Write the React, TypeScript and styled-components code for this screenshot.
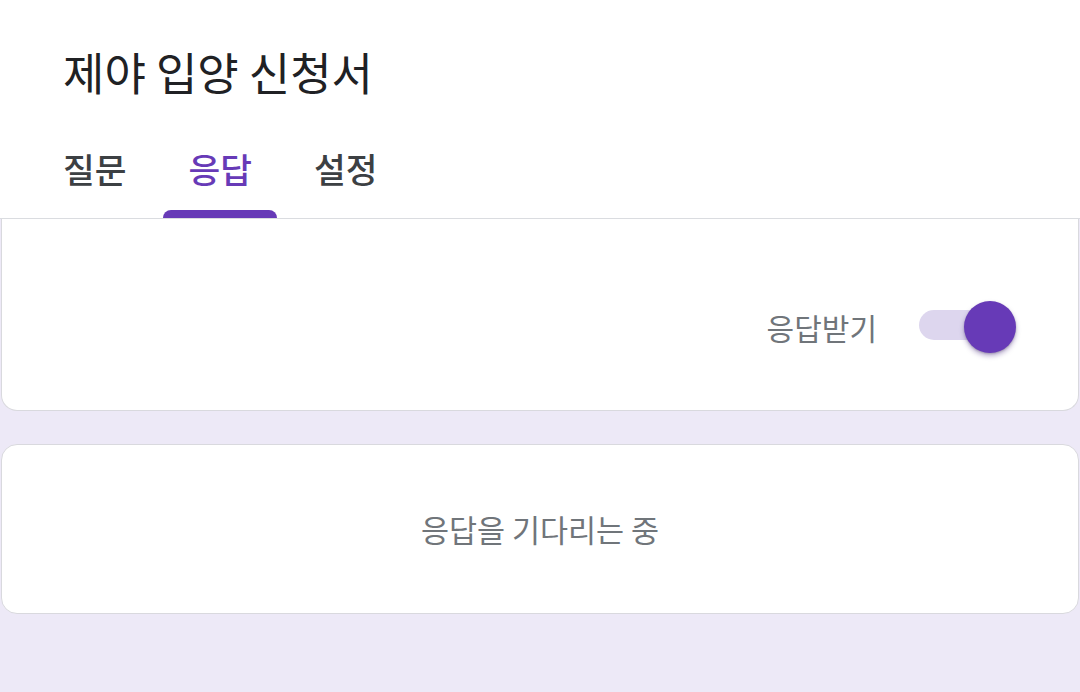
import React from "react";
import styled, { createGlobalStyle } from "styled-components";

const Global = createGlobalStyle`
  html, body { margin: 0; padding: 0; }
  body {
    background: #ede9f7;
    font-family: "Noto Sans CJK KR", "Noto Sans", Roboto, sans-serif;
    -webkit-font-smoothing: antialiased;
  }
  #root { min-height: 692px; }
`;

const Page = styled.div`
  display: flex;
  flex-direction: column;
  min-height: 692px;
  background: #ede9f7;
`;

const Header = styled.header`
  background: #ffffff;
  border-bottom: 1px solid #dadce0;
  height: 218px;
  display: flex;
  flex-direction: column;
`;

const Title = styled.h1`
  margin: 46px 0 0 63px;
  font-size: 45px;
  line-height: 52px;
  font-weight: 400;
  color: #202124;
`;

const TabBar = styled.nav`
  display: flex;
  gap: 12px;
  padding-left: 38px;
  flex: 1;
`;

const Tab = styled.div<{ $active?: boolean }>`
  position: relative;
  padding: 48px 25px 0;
  font-size: 34.5px;
  line-height: 44px;
  font-weight: 500;
  color: ${(p) => (p.$active ? "#673ab7" : "#3c4043")};
  &::after {
    content: "";
    display: ${(p) => (p.$active ? "block" : "none")};
    position: absolute;
    left: 0;
    right: 0;
    bottom: 0;
    height: 8px;
    border-radius: 8px 8px 0 0;
    background: #673ab7;
  }
`;

const Content = styled.main`
  display: flex;
  flex-direction: column;
  gap: 33px;
  padding: 0 1px;
`;

const ToggleCard = styled.section`
  background: #ffffff;
  border: 1px solid #d9d9de;
  border-top: none;
  border-radius: 0 0 16px 16px;
  height: 192px;
  box-sizing: border-box;
  padding: 24px 62px 0 0;
  display: flex;
  align-items: center;
  justify-content: flex-end;
  gap: 42px;
`;

const Label = styled.span`
  font-size: 30px;
  color: #70757a;
`;

const Switch = styled.div`
  position: relative;
  width: 97px;
  height: 52px;
  display: flex;
  align-items: center;
`;

const Track = styled.div`
  width: 88px;
  height: 30px;
  margin-top: -4px;
  border-radius: 15px;
  background: #ddd6ee;
`;

const Knob = styled.div`
  position: absolute;
  right: 0;
  top: 0;
  width: 52px;
  height: 52px;
  border-radius: 50%;
  background: #673ab7;
  box-shadow: 0 3px 5px rgba(60, 30, 120, 0.35), 0 1px 2px rgba(0, 0, 0, 0.2);
`;

const EmptyCard = styled.section`
  background: #ffffff;
  border: 1px solid #d9d9de;
  border-radius: 16px;
  height: 170px;
  box-sizing: border-box;
  display: flex;
  align-items: center;
  justify-content: center;
  font-size: 30.5px;
  color: #70757a;
`;

export default function App() {
  return (
    <Page>
      <Global />
      <Header>
        <Title>제야 입양 신청서</Title>
        <TabBar>
          <Tab>질문</Tab>
          <Tab $active>응답</Tab>
          <Tab>설정</Tab>
        </TabBar>
      </Header>
      <Content>
        <ToggleCard>
          <Label>응답받기</Label>
          <Switch>
            <Track />
            <Knob />
          </Switch>
        </ToggleCard>
        <EmptyCard>응답을 기다리는 중</EmptyCard>
      </Content>
    </Page>
  );
}
